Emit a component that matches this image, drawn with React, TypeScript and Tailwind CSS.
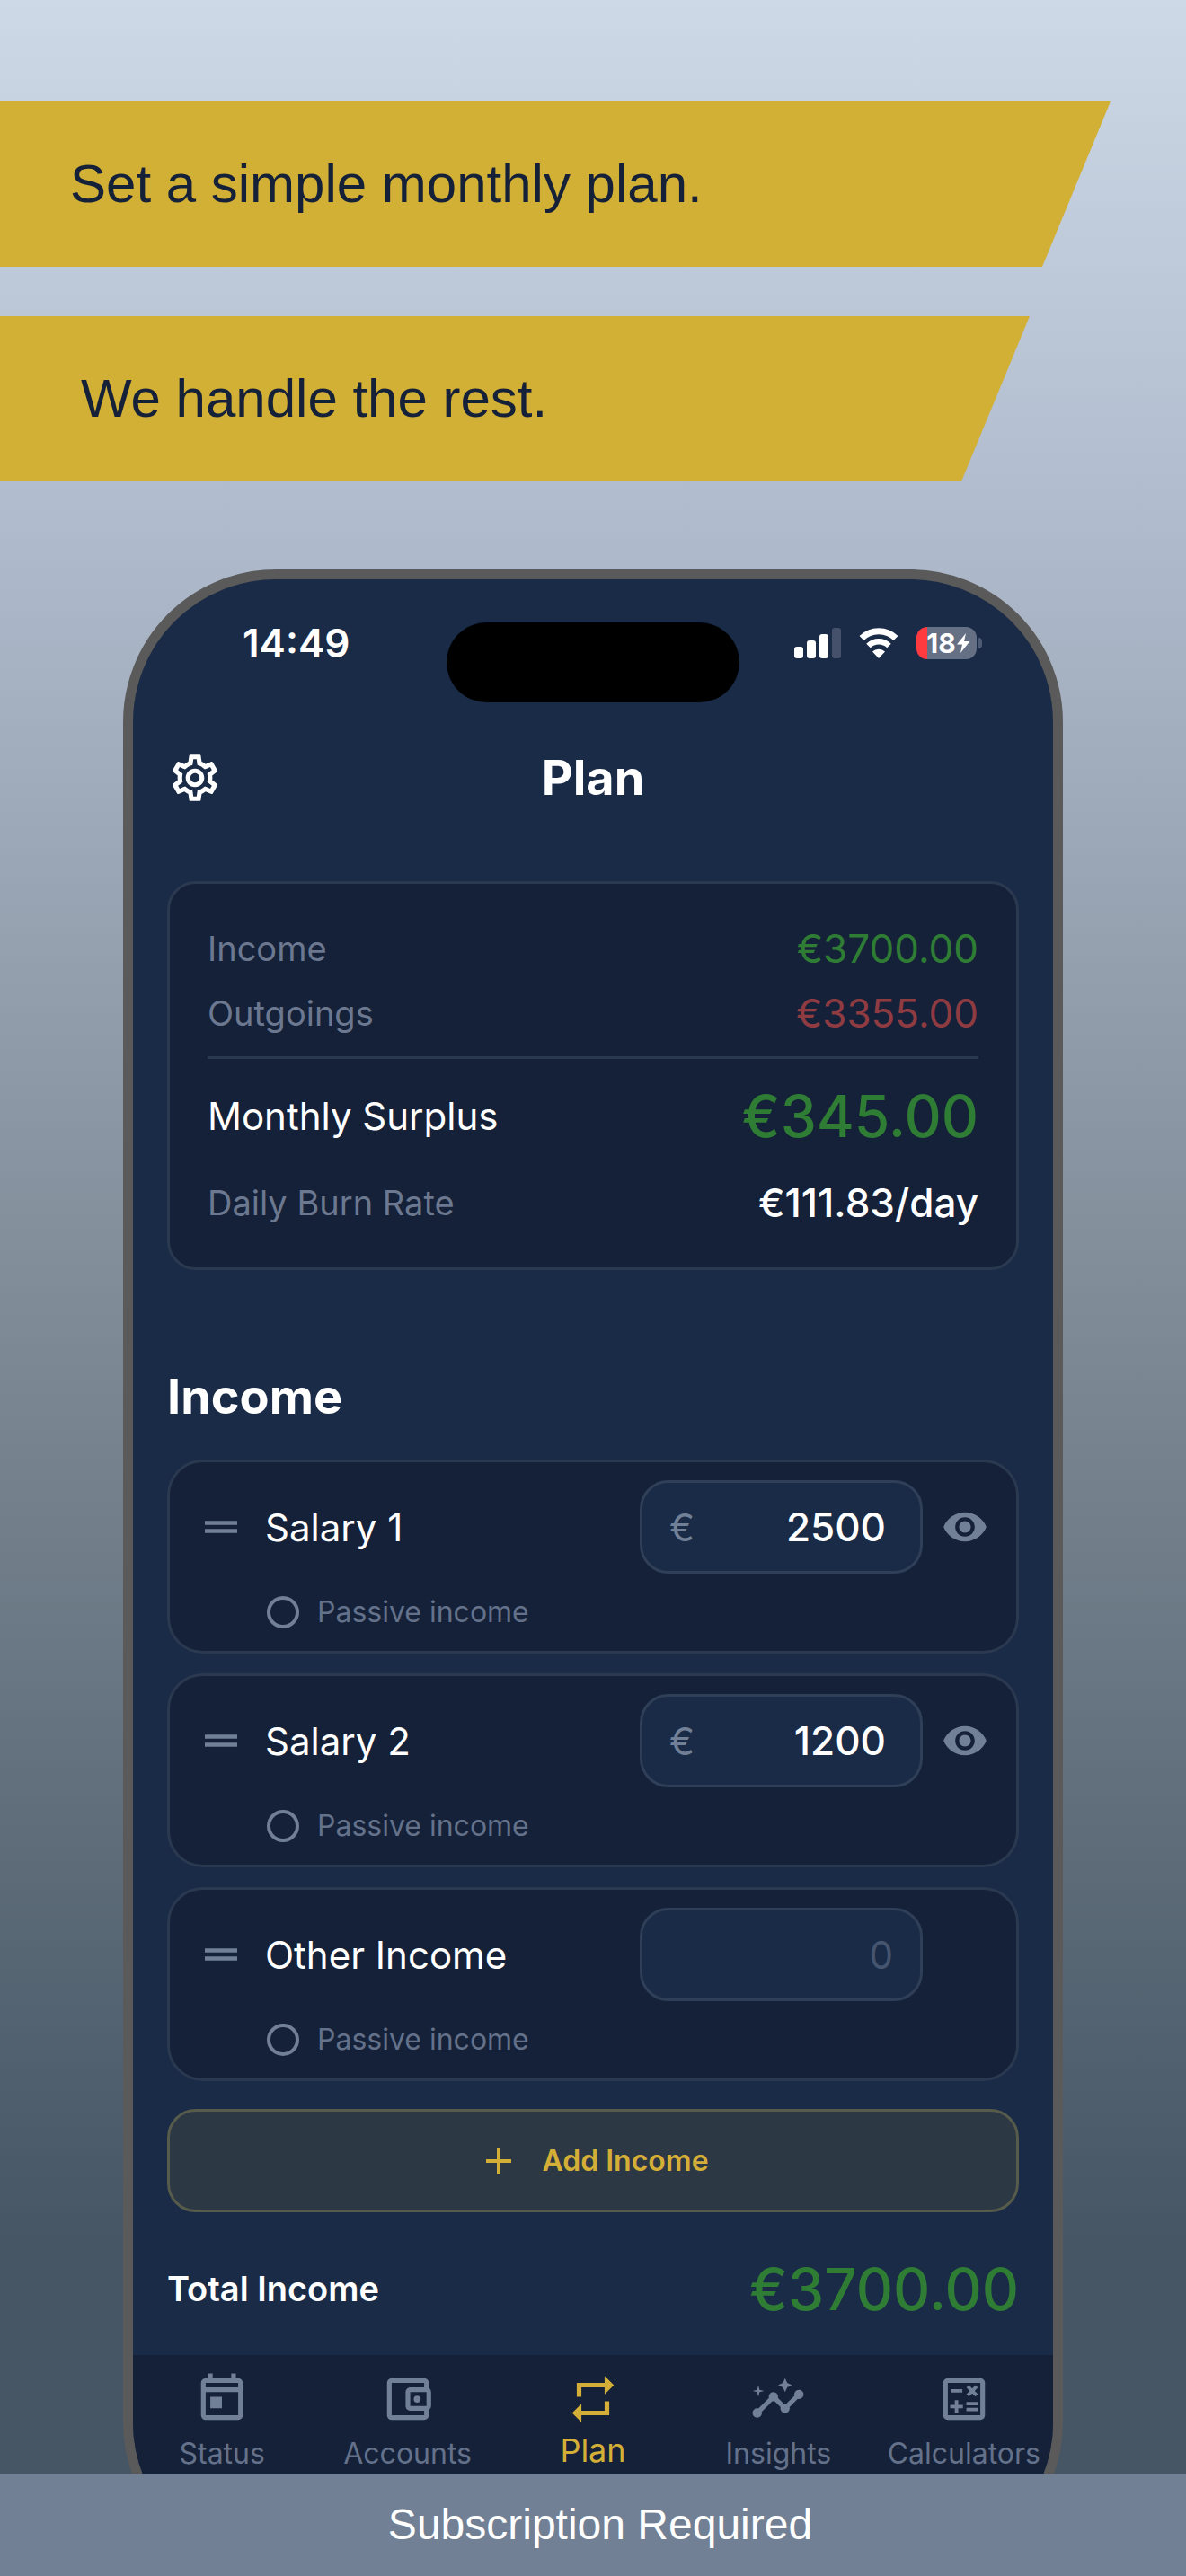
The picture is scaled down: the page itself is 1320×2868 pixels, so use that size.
import {
    MdAdd,
    MdDragHandle,
    MdInsights,
    MdOutlineAccountBalanceWallet,
    MdOutlineCalculate,
    MdOutlineSettings,
    MdOutlineToday,
    MdRepeat,
    MdVisibility,
} from "react-icons/md"
import type { IconType } from "react-icons"
import { useState } from "react"

interface IncomeItem {
    id: string
    name: string
    amount: string
}

interface NavItem {
    label: string
    icon: IconType
    active?: boolean
}

const incomes: IncomeItem[] = [
    { id: "salary-1", name: "Salary 1", amount: "2500" },
    { id: "salary-2", name: "Salary 2", amount: "1200" },
    { id: "other", name: "Other Income", amount: "" },
]

const navItems: NavItem[] = [
    { label: "Status", icon: MdOutlineToday },
    { label: "Accounts", icon: MdOutlineAccountBalanceWallet },
    { label: "Plan", icon: MdRepeat, active: true },
    { label: "Insights", icon: MdInsights },
    { label: "Calculators", icon: MdOutlineCalculate },
]

function Headlines() {
    return (
        <header className="flex flex-col gap-[55px] pt-[113px] font-['Liberation_Sans',Arial,sans-serif] text-[60px] leading-[184px] text-[#152138]">
            <h1 className="w-[1236px] max-w-full bg-[#d2af35] pl-[78px] [clip-path:polygon(0_0,100%_0,calc(100%-76px)_100%,0_100%)]">
                Set a simple monthly plan.
            </h1>
            <p className="w-[1146px] max-w-full bg-[#d2af35] pl-[90px] [clip-path:polygon(0_0,100%_0,calc(100%-76px)_100%,0_100%)]">
                We handle the rest.
            </p>
        </header>
    )
}

function StatusBar() {
    return (
        <div className="grid grid-cols-[1fr_326px_1fr] items-start pt-12">
            <p className="pl-[122px] text-[44px] leading-[46px] font-semibold">14:49</p>
            <div className="h-[89px] rounded-full bg-black" />
            <div className="flex h-[46px] items-center gap-5 pl-[61px]">
                <svg viewBox="0 0 52 34" className="h-[34px] w-[52px]" fill="#fff">
                    <rect x="0" y="21" width="10" height="13" rx="3" />
                    <rect x="14" y="14" width="10" height="20" rx="3" />
                    <rect x="28" y="7" width="10" height="27" rx="3" />
                    <rect x="42" y="0" width="10" height="34" rx="3" fill="#45516b" />
                </svg>
                <svg viewBox="0 0 44 34" className="h-[34px] w-11">
                    <path d="M3 11.5a27 27 0 0 1 38 0" fill="none" stroke="#fff" strokeWidth="7" />
                    <path d="M10.5 20a16.500 16.500 0 0 1 23 0" fill="none" stroke="#fff" strokeWidth="6.500" />
                    <path d="M22 34l-7-7.500a10 10 0 0 1 14 0z" fill="#fff" />
                </svg>
                <div className="flex items-center gap-0.5">
                    <div className="flex h-9 w-[67px] items-center justify-center rounded-xl bg-linear-to-r from-[#ff3b3f] from-[18%] to-[#667085] to-[18%] pl-1">
                        <span className="text-[30px] leading-9 font-bold">18</span>
                        <svg viewBox="0 0 16 24" className="h-6 w-4" fill="#fff">
                            <path d="M11 1L1 13.500h6L5 23 15.500 10H9z" />
                        </svg>
                    </div>
                    <div className="h-3 w-1 rounded-r-full bg-[#4f5b75]" />
                </div>
            </div>
        </div>
    )
}

function Summary() {
    return (
        <section className="rounded-[32px] border-3 border-[#2b3950] bg-[#152138] px-[42px] pt-9 pb-6">
            <dl className="text-[38px] leading-[72px] text-[#6b7890]">
                <div className="flex items-center justify-between">
                    <dt>Income</dt>
                    <dd className="text-[44px] text-[#2f7d35]">€3700.00</dd>
                </div>
                <div className="flex items-center justify-between border-b-3 border-[#2b3950] pb-3">
                    <dt>Outgoings</dt>
                    <dd className="text-[44px] text-[#8f3b42]">€3355.00</dd>
                </div>
                <div className="flex items-center justify-between pt-4 leading-[96px]">
                    <dt className="text-[42px] text-white">Monthly Surplus</dt>
                    <dd className="text-[64px] font-medium text-[#2f7d35]">€345.00</dd>
                </div>
                <div className="flex items-center justify-between leading-[96px]">
                    <dt>Daily Burn Rate</dt>
                    <dd className="text-[44px] font-medium text-white">€111.83/day</dd>
                </div>
            </dl>
        </section>
    )
}

function IncomeCard({ item }: { item: IncomeItem }) {
    const [amount, setAmount] = useState(item.amount)
    const filled = item.amount !== ""

    return (
        <li className="rounded-[40px] border-3 border-[#2b3950] bg-[#152138] pt-5 pr-[31px] pl-[30px]">
            <div className="flex items-center">
                <MdDragHandle className="mr-[22px] size-[54px] text-[#718096]" />
                <label htmlFor={item.id} className="flex-1 text-[42px] text-white">
                    {item.name}
                </label>
                <div className="flex h-[104px] w-[315px] items-center rounded-[32px] border-3 border-[#2f3f58] bg-[#1a2b47] px-[30px]">
                    {filled && <span className="text-[42px] text-[#718096]">€</span>}
                    <input
                        id={item.id}
                        inputMode="decimal"
                        placeholder="0"
                        value={amount}
                        onChange={(e) => setAmount(e.target.value)}
                        className={
                            filled
                                ? "w-full min-w-0 bg-transparent pr-2 text-right text-[44px] font-medium text-white outline-none"
                                : "w-full min-w-0 bg-transparent text-right text-[42px] text-white outline-none placeholder:text-[#455570]"
                        }
                    />
                </div>
                <div className="ml-[21px] size-[52px]">
                    {filled && (
                        <button type="button" aria-label={`Hide ${item.name}`} className="block">
                            <MdVisibility className="size-[52px] text-[#718096]" />
                        </button>
                    )}
                </div>
            </div>
            <label className="ml-[78px] flex h-[86px] w-fit items-center gap-5 text-[32px] text-[#64718a]">
                <input
                    type="checkbox"
                    className="size-9 appearance-none rounded-full border-4 border-[#718096] checked:bg-[#718096]"
                />
                Passive income
            </label>
        </li>
    )
}

function BottomNav() {
    return (
        <nav className="-mx-1 grid h-[234px] grid-cols-5 bg-[#152138] pt-[18px]">
            {navItems.map(({ label, icon: Icon, active }) => (
                <a
                    key={label}
                    href="#"
                    className={
                        active
                            ? "flex flex-col items-center gap-1 text-4xl leading-11 text-[#d4af37]"
                            : "flex flex-col items-center gap-2 text-[32px] leading-11 text-[#64718a]"
                    }
                >
                    <Icon className={active ? "size-[62px]" : "size-[62px] text-[#718096]"} />
                    {label}
                </a>
            ))}
        </nav>
    )
}

export default function App() {
    return (
        <div className="min-h-screen overflow-hidden bg-[linear-gradient(to_bottom,#cdd9e6,#b0bbcd_20%,#808c98_50%,#465664_87%)]">
            <Headlines />
            <main className="mx-auto mt-[98px] w-full max-w-[1046px] overflow-hidden rounded-[170px] border-11 border-[#5a5a5a] bg-[#1a2b47] font-[Inter,sans-serif] text-white">
                <StatusBar />
                <div className="px-[38px]">
                    <div className="mt-[52px] grid grid-cols-[1fr_auto_1fr] items-center">
                        <button type="button" aria-label="Settings" className="w-fit">
                            <MdOutlineSettings className="size-[62px]" />
                        </button>
                        <h2 className="text-[54px] leading-16 font-bold">Plan</h2>
                    </div>
                    <div className="mt-[83px]">
                        <Summary />
                    </div>
                    <h3 className="mt-[109px] text-[54px] leading-16 font-bold">Income</h3>
                    <ul className="mt-[38px] flex flex-col gap-[22px]">
                        {incomes.map((item) => (
                            <IncomeCard key={item.id} item={item} />
                        ))}
                    </ul>
                    <button
                        type="button"
                        className="mt-[31px] flex h-[115px] w-full items-center justify-center gap-6 rounded-[32px] border-3 border-[#565b4b] bg-[#2d3845] text-[32px] font-semibold text-[#d4af37]"
                    >
                        <MdAdd className="size-12" />
                        Add Income
                    </button>
                    <div className="flex h-[159px] items-center justify-between pt-3">
                        <p className="text-[38px] font-semibold">Total Income</p>
                        <p className="text-[64px] font-medium text-[#2f7d35]">€3700.00</p>
                    </div>
                </div>
                <BottomNav />
            </main>
            <footer className="relative -mt-[113px] bg-[#718094] pl-4 text-center font-['Liberation_Sans',Arial,sans-serif] text-[48px] leading-[114px] text-white">
                Subscription Required
            </footer>
        </div>
    )
}
